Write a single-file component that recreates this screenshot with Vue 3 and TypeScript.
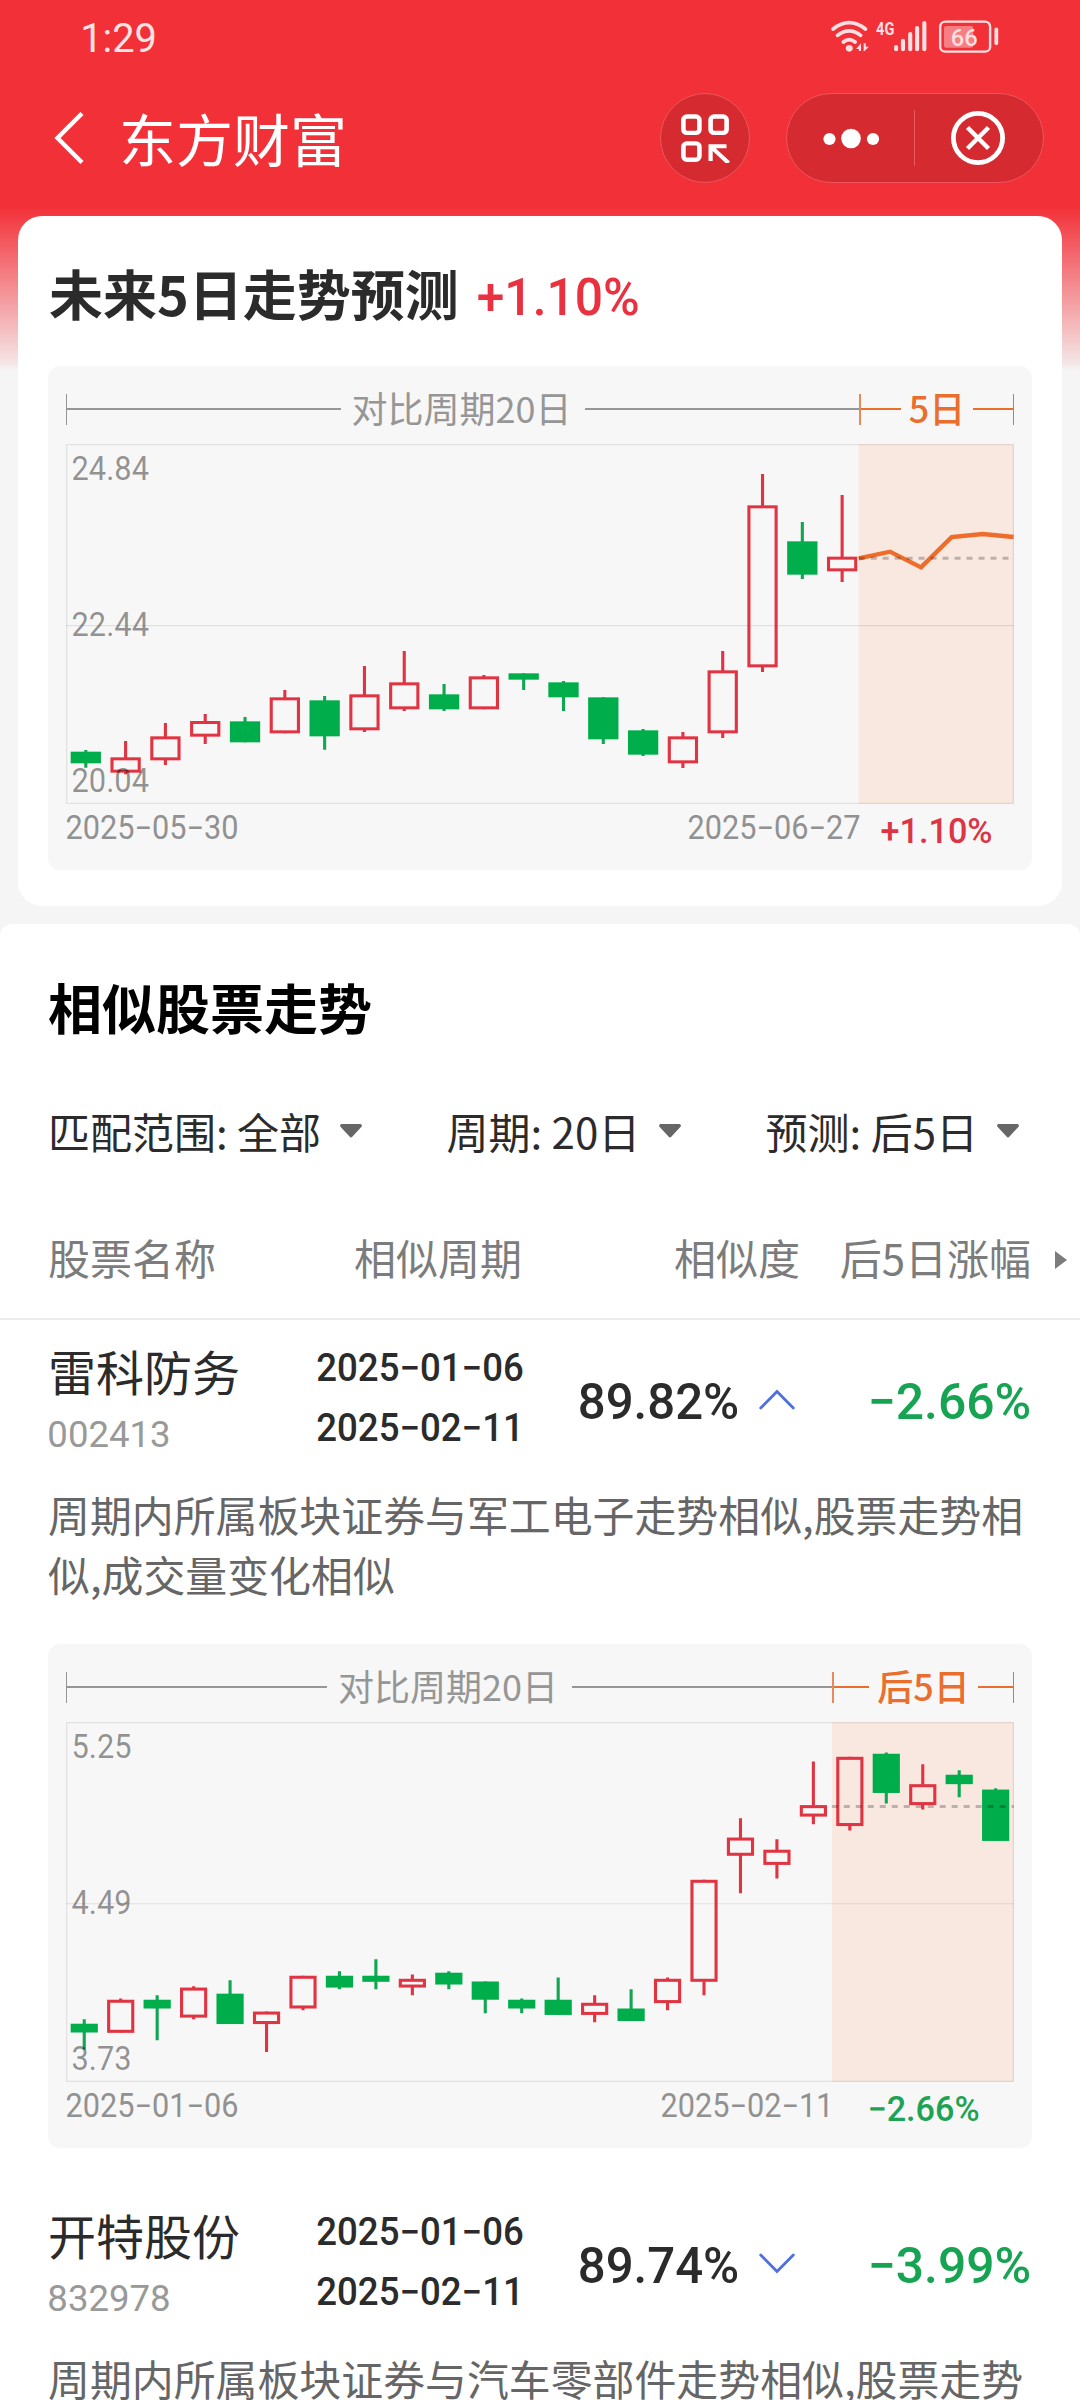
<script setup lang="ts">
import { h } from 'vue'

interface Candle {
  up: boolean
  high: number
  top: number
  bottom: number
  low: number
}
interface Chart {
  period: string
  forecast: string
  viewHeight: number
  middle: number
  labels: { text: string; y: number; width: number }[]
  first: number
  pitch: number
  body: number
  split: number
  from: string
  to: string
  change: string
  rising: boolean
  candles: Candle[]
  reference: number
  line?: string
}

/** Condensed figures: w is the width of the drawn digits, cap their height. */
const Num = (p: { text: string; w: number; cap: number }) => {
  const size = p.cap / 0.711
  return h('svg', { width: p.w, height: p.cap, 'font-size': size }, [
    h(
      'text',
      { x: -0.045 * size, y: p.cap, textLength: p.w + 0.09 * size, lengthAdjust: 'spacingAndGlyphs' },
      p.text,
    ),
  ])
}
Num.props = ['text', 'w', 'cap']

const candles = (rows: [string, number, number, number, number][], offset: number): Candle[] =>
  rows.map(([d, high, top, bottom, low]) => ({
    up: d === 'r',
    high: high - offset,
    top: top - offset,
    bottom: bottom - offset,
    low: low - offset,
  }))

const forecastChart: Chart = {
  period: '对比周期20日',
  forecast: '5日',
  viewHeight: 1080,
  middle: 545,
  labels: [
    { text: '24.84', y: 108, width: 216 },
    { text: '22.44', y: 576, width: 216 },
    { text: '20.04', y: 1044, width: 216 },
  ],
  first: 57.5,
  pitch: 115.6,
  body: 88,
  split: 2302,
  from: '2025−05−30',
  to: '2025−06−27',
  change: '+1.10%',
  rising: true,
  reference: 343,
  line: '2302,343 2393,323 2483,370 2572,279 2662,270 2752,279',
  candles: candles(
    [
      ['g', 1170, 1175, 1210, 1223],
      ['r', 1143, 1192, 1238, 1243],
      ['r', 1089, 1129, 1201, 1215],
      ['r', 1062, 1083, 1130, 1152],
      ['g', 1071, 1084, 1147, 1147],
      ['r', 990, 1012, 1120, 1120],
      ['g', 1008, 1021, 1129, 1169],
      ['r', 918, 1003, 1111, 1116],
      ['r', 873, 967, 1048, 1053],
      ['g', 972, 1003, 1048, 1053],
      ['r', 945, 949, 1048, 1048],
      ['g', 940, 940, 959, 990],
      ['g', 963, 967, 1012, 1053],
      ['g', 1012, 1012, 1138, 1152],
      ['g', 1107, 1111, 1184, 1188],
      ['r', 1116, 1129, 1210, 1224],
      ['r', 873, 931, 1120, 1134],
      ['r', 342, 436, 922, 936],
      ['g', 486, 544, 644, 657],
      ['r', 405, 590, 634, 666],
    ],
    252,
  ),
}

const similarChart: Chart = {
  period: '对比周期20日',
  forecast: '后5日',
  viewHeight: 1065.5,
  middle: 538,
  labels: [
    { text: '5.25', y: 108, width: 165 },
    { text: '4.49', y: 569, width: 165 },
    { text: '3.73', y: 1031, width: 165 },
  ],
  first: 53,
  pitch: 105.87,
  body: 79,
  split: 2224,
  from: '2025−01−06',
  to: '2025−02−11',
  change: '−2.66%',
  rising: false,
  reference: 250,
  candles: candles(
    [
      ['g', 1151, 1164, 1190, 1240],
      ['r', 1089, 1093, 1191, 1191],
      ['g', 1080, 1093, 1119, 1213],
      ['r', 1053, 1057, 1146, 1151],
      ['g', 1035, 1075, 1165, 1165],
      ['r', 1128, 1128, 1165, 1248],
      ['r', 1022, 1022, 1119, 1124],
      ['g', 1009, 1022, 1057, 1062],
      ['g', 973, 1022, 1040, 1062],
      ['r', 1018, 1031, 1057, 1080],
      ['g', 1009, 1013, 1048, 1062],
      ['g', 1039, 1039, 1093, 1133],
      ['g', 1089, 1093, 1119, 1133],
      ['g', 1027, 1093, 1138, 1138],
      ['r', 1080, 1102, 1138, 1160],
      ['g', 1062, 1119, 1156, 1156],
      ['r', 1027, 1031, 1103, 1124],
      ['r', 738, 738, 1040, 1080],
      ['r', 556, 613, 667, 778],
      ['r', 618, 649, 694, 734],
      ['r', 388, 517, 551, 574],
      ['r', 374, 374, 579, 592],
      ['g', 361, 365, 481, 512],
      ['r', 396, 455, 517, 530],
      ['g', 414, 427, 455, 494],
      ['g', 467, 471, 623, 623],
    ],
    271,
  ),
}

const filters = ['匹配范围: 全部', '周期: 20日', '预测: 后5日']

const stocks = [
  {
    name: '雷科防务',
    code: '002413',
    from: '2025−01−06',
    to: '2025−02−11',
    score: '89.82%',
    change: '−2.66%',
    open: true,
    note: '周期内所属板块证券与军工电子走势相似,股票走势相似,成交量变化相似',
    chart: similarChart as Chart | null,
  },
  {
    name: '开特股份',
    code: '832978',
    from: '2025−01−06',
    to: '2025−02−11',
    score: '89.74%',
    change: '−3.99%',
    open: false,
    note: '周期内所属板块证券与汽车零部件走势相似,股票走势',
    chart: null as Chart | null,
  },
]

/** Draws one chart panel: span header, candlestick plot, dates. */
const ChartPanel = (p: { chart: Chart }) => {
  const c = p.chart
  const splitPx = Math.round(c.split / 2.9037)
  const span = (cls: string, label: string, style?: object) =>
    h('div', { class: ['span', cls], style }, [
      h('i', { class: 'rule' }),
      h('span', label),
      h('i', { class: 'rule' }),
    ])
  return h('div', { class: 'panel' }, [
    h('div', { class: 'panel-head' }, [
      span('past', c.period, { width: splitPx + 'px' }),
      span('next', c.forecast),
    ]),
    h(
      'svg',
      { class: 'plot', width: 948, height: 360, viewBox: `0 0 2753 ${c.viewHeight}`, preserveAspectRatio: 'none' },
      [
        h('rect', { x: c.split, y: 0, width: 2753 - c.split, height: c.viewHeight, fill: '#f9e8e0' }),
        h('rect', { class: 'grid', x: 2, y: 2, width: 2749, height: c.viewHeight - 4 }),
        h('path', { class: 'grid', d: `M0 ${c.middle}H2753` }),
        ...c.candles.map((k, i) => {
          const x = c.first + i * c.pitch
          const left = x - c.body / 2
          const height = k.bottom - k.top
          return h('g', { class: k.up ? 'up' : 'down' }, [
            h('path', { d: `M${x} ${k.high}V${k.top + 2}M${x} ${k.bottom - 2}V${k.low}` }),
            k.up
              ? h('rect', { x: left + 4.5, y: k.top + 4.5, width: c.body - 9, height: height - 9 })
              : h('rect', { x: left, y: k.top, width: c.body, height }),
          ])
        }),
        c.line ? h('polyline', { class: 'trend', points: c.line }) : null,
        h('path', { class: 'base', d: `M${c.split} ${c.reference}H2753` }),
        ...c.labels.map((l) =>
          h('text', { x: 16, y: l.y, textLength: l.width + 9, lengthAdjust: 'spacingAndGlyphs' }, l.text),
        ),
      ],
    ),
    h('div', { class: 'panel-foot' }, [
      h('div', { class: 'dates', style: { width: splitPx + 'px' } }, [
        h(Num, { text: c.from, w: 170, cap: 23 }),
        h(Num, { text: c.to, w: 170, cap: 23 }),
      ]),
      h('div', { class: ['change', c.rising ? 'rise' : 'fall'] }, [h(Num, { text: c.change, w: 109, cap: 24.3 })]),
    ]),
  ])
}
ChartPanel.props = ['chart']
</script>

<template>
  <div class="page" lang="zh-CN">
    <header class="top">
      <div class="status">
        <Num class="clock" text="1:29" :w="73" :cap="29.3" />
        <svg class="signals" width="169" height="34" viewBox="845 60 490.7 102" preserveAspectRatio="none">
          <g fill="none" stroke="#ffdfe1" stroke-width="11" stroke-linecap="round">
            <path d="M851 87Q898 49 945 87" />
            <path d="M864 106Q898 79 931 106" />
            <path d="M881 126Q898 112 915 126" />
            <path d="M1034 141V148M1054 122V148M1075 102V148M1095 84V148M1116 69V148" stroke-width="12" />
            <rect x="1162" y="65" width="145" height="90" rx="15" stroke-width="7" />
            <path d="M1325 88V130" />
          </g>
          <rect x="1173" y="78" width="85" height="65" rx="6" fill="#fff" opacity=".38" />
          <circle cx="898" cy="145" r="10" fill="#ffdfe1" />
          <path d="M932 130V153H926V147H918ZM940 130V155L955 140H946V130Z" fill="#ffdfe1" />
          <text x="976" y="104" font-size="57" font-weight="700" textLength="53" lengthAdjust="spacingAndGlyphs">4G</text>
          <text x="1193" y="138" font-size="73" font-weight="500" textLength="78" lengthAdjust="spacingAndGlyphs">66</text>
        </svg>
      </div>
      <nav class="nav">
        <svg class="back" width="30" height="52" viewBox="0 0 30 52" fill="none" stroke="#fff" stroke-width="4.4">
          <path d="M28 1.5L3.5 26L28 50.5" />
        </svg>
        <h1>东方财富</h1>
        <div class="scan">
          <svg width="50" height="50" viewBox="0 0 50 52" preserveAspectRatio="none" fill="none" stroke="#fff" stroke-width="4.6">
            <rect x="3.4" y="3.7" width="16" height="17" rx="3.5" />
            <rect x="30.6" y="3.7" width="16" height="17" rx="3.5" />
            <rect x="3.4" y="31.6" width="16" height="17" rx="3.5" />
            <path d="M46.5 34.6H30.6V50M31 35L48.5 52" stroke-width="4.2" />
          </svg>
        </div>
        <div class="capsule">
          <div class="half">
            <svg width="58" height="22" viewBox="0 0 58 22" fill="#fff">
              <circle cx="7.5" cy="12" r="6.1" />
              <circle cx="29" cy="11.5" r="9.8" />
              <circle cx="51" cy="12" r="6.1" />
            </svg>
          </div>
          <i class="split"></i>
          <div class="half">
            <svg width="56" height="56" viewBox="0 0 56 56" fill="none" stroke="#fff" stroke-width="4.8">
              <circle cx="28" cy="28" r="24.6" />
              <path d="M17.5 17.5L38.5 38.5M38.5 17.5L17.5 38.5" stroke-width="4.4" />
            </svg>
          </div>
        </div>
      </nav>
    </header>

    <section class="card">
      <div class="card-title">
        <h2>未来5日走势预测</h2>
        <Num class="gain" text="+1.10%" :w="158.5" :cap="36.3" />
      </div>
      <ChartPanel :chart="forecastChart" />
    </section>

    <section class="list">
      <h2>相似股票走势</h2>
      <div class="filters">
        <div v-for="f in filters" :key="f" class="filter">
          <span>{{ f }}</span>
          <svg width="22" height="14" viewBox="0 0 22 14" fill="#666">
            <path d="M1.5 0H20.5Q23 1 21.3 3L12.5 12.6Q11 14.4 9.5 12.6L.7 3Q-1 1 1.5 0Z" />
          </svg>
        </div>
      </div>
      <div class="row head">
        <span>股票名称</span>
        <span>相似周期</span>
        <span>相似度</span>
        <span>后5日涨幅</span>
        <svg width="12" height="18" viewBox="0 0 12 18" fill="#7c7c7c"><path d="M0 0L12 9L0 18Z" /></svg>
      </div>
      <article v-for="s in stocks" :key="s.code" class="stock">
        <div class="row main">
          <div class="name">
            <strong>{{ s.name }}</strong>
            <Num class="code" :text="s.code" :w="120" :cap="26" />
          </div>
          <div class="period">
            <Num :text="s.from" :w="204" :cap="27" />
            <Num :text="s.to" :w="204" :cap="27" />
          </div>
          <div class="score">
            <Num :text="s.score" :w="157" :cap="36" />
            <svg class="arrow" :class="{ closed: !s.open }" width="36" height="21" viewBox="0 0 36 21">
              <path d="M1.7 19L18 2.5L34.3 19" />
            </svg>
          </div>
          <div class="result">
            <Num :text="s.change" :w="159" :cap="36" />
          </div>
        </div>
        <p>{{ s.note }}</p>
        <ChartPanel v-if="s.chart" :chart="s.chart" />
      </article>
    </section>
  </div>
</template>

<style>
body {
  margin: 0;
}
.panel {
  box-sizing: border-box;
  width: 984px;
  height: 504px;
  padding: 0 18px;
  border-radius: 12px;
  background: #f7f7f7;
}
.panel-head {
  display: flex;
  box-sizing: border-box;
  height: 78px;
  padding-top: 8px;
  align-items: center;
}
.span {
  display: flex;
  box-sizing: border-box;
  height: 31px;
  align-items: center;
  font-size: 36px;
  line-height: 31px;
  white-space: nowrap;
}
.span span {
  position: relative;
  top: -2px;
}
.span .rule {
  flex: 1;
  height: 1.5px;
  background: currentColor;
}
.past {
  color: #969696;
  border-left: 1px solid #969696;
}
.past span {
  margin: 0 14px 0 11px;
}
.next {
  flex: 1;
  color: #e96f2f;
  border-left: 2px solid #e58a5c;
  border-right: 1px solid #e96f2f;
  font-weight: 500;
}
.next span {
  margin: 0 8px;
}
.plot {
  display: block;
}
.plot .grid {
  fill: none;
  stroke: #000;
  stroke-opacity: 0.09;
  stroke-width: 3.5;
}
.plot .up {
  fill: none;
  stroke: #e03442;
  stroke-width: 9;
}
.plot .down {
  fill: #00ad4b;
}
.plot .down path {
  stroke: #12a552;
  stroke-width: 9;
}
.plot .trend {
  fill: none;
  stroke: #ee6d2b;
  stroke-width: 13;
}
.plot .base {
  stroke: #000;
  stroke-opacity: 0.24;
  stroke-width: 9;
  stroke-dasharray: 17.4 17.4;
}
.plot text {
  fill: #000;
  fill-opacity: 0.42;
  font-family: Roboto, 'Liberation Sans', sans-serif;
  font-size: 97px;
}
.panel-foot {
  display: flex;
  box-sizing: border-box;
  height: 66px;
  padding-top: 12px;
  align-items: flex-start;
}
.page svg {
  display: block;
  flex: none;
}
.panel-foot svg {
  overflow: visible;
  font-family: Roboto, 'Liberation Sans', sans-serif;
}
.dates {
  display: flex;
  justify-content: space-between;
  fill: #919191;
}
.dates svg {
  margin-left: 1px;
}
.change {
  flex: 1;
  display: flex;
  justify-content: center;
  padding-top: 2.5px;
  font-weight: 500;
}
.rise {
  fill: #dc3545;
}
.fall {
  fill: #1ea354;
}
</style>

<style scoped>
.page {
  width: 1080px;
  height: 2400px;
  overflow: hidden;
  background: linear-gradient(#f23038 0, #f23038 207px, #f5e6e7 364px, #f5f5f5 370px);
  font-family: 'Noto Sans CJK SC', 'Noto Sans', sans-serif;
  color: #2b2b2b;
}
h1,
h2,
p {
  margin: 0;
}
.status {
  display: flex;
  box-sizing: border-box;
  height: 80px;
  padding: 20px 80px 0 82px;
  justify-content: space-between;
}
.clock {
  margin-top: 3px;
  fill: #ffe3e4;
}
.clock,
.gain,
.code,
.signals,
.main svg {
  overflow: visible;
  font-family: Roboto, 'Liberation Sans', sans-serif;
}
.signals {
  fill: #ffdfe1;
}
.nav {
  display: flex;
  height: 116px;
  padding: 0 36px 0 54px;
  align-items: center;
}
.nav h1 {
  flex: 1;
  margin-left: 35px;
  padding-bottom: 3px;
  font-size: 57px;
  line-height: 80px;
  font-weight: 400;
  color: #fff;
}
.scan,
.capsule {
  display: flex;
  box-sizing: border-box;
  height: 90px;
  align-items: center;
  justify-content: center;
  border: 1px solid #ee555c;
  background: #d42a30;
}
.scan {
  width: 90px;
  border-radius: 50%;
}
.capsule {
  width: 258px;
  margin-left: 36px;
  border-radius: 45px;
}
.half {
  flex: 1;
  display: flex;
  justify-content: center;
}
.half:first-child {
  flex: none;
  width: 127px;
}
.half:last-child {
  padding-right: 3px;
}
.split {
  width: 1px;
  height: 56px;
  background: #e8585e;
}
.card {
  box-sizing: border-box;
  width: 1044px;
  height: 690px;
  margin: 20px 18px 0;
  padding: 0 30px;
  border-radius: 24px;
  background: #fff;
}
.card-title {
  display: flex;
  box-sizing: border-box;
  height: 150px;
  padding: 3px 0 0 1px;
  align-items: center;
}
h2 {
  font-size: 54px;
  line-height: 80px;
  font-weight: 700;
}
.gain {
  margin: 9px 0 0 20px;
  font-weight: 500;
  fill: #ea3140;
}
.list {
  margin-top: 18px;
  height: 1476px;
  border-radius: 12px 12px 0 0;
  background: #fff;
}
.list h2 {
  padding-left: 48px;
  line-height: 165px;
  color: #000;
}
.filters {
  display: flex;
  height: 83px;
  padding: 0 61px 0 48px;
  align-items: center;
  justify-content: space-between;
  font-size: 42px;
  white-space: nowrap;
}
.filter {
  display: flex;
  align-items: center;
  gap: 19px;
}
.row {
  display: grid;
  box-sizing: border-box;
  grid-template-columns: 270px 204px 278px 231px;
  padding-left: 48px;
}
.head {
  grid-template-columns: 270px 204px 278px 231px 12px;
  height: 148px;
  padding-top: 23px;
  border-bottom: 2px solid #ececec;
  align-items: center;
  font-size: 42px;
  color: #7c7c7c;
  text-align: right;
  white-space: nowrap;
}
.head span:first-child {
  text-align: left;
}
.head svg {
  margin: 7px 0 0 24px;
}
.main {
  height: 164px;
}
.name strong {
  display: block;
  height: 101px;
  font-size: 48px;
  line-height: 101px;
  font-weight: 400;
}
.code {
  margin-left: 1px;
  fill: #999;
}
.period {
  padding-top: 34px;
  font-weight: 500;
  fill: #2b2b2b;
}
.period svg + svg {
  margin-top: 33px;
}
.score {
  display: flex;
  padding: 63px 5px 0 58px;
  justify-content: space-between;
  font-weight: 500;
  fill: #2b2b2b;
}
.arrow {
  margin-top: 6px;
  fill: none;
  stroke: #4f70dc;
  stroke-width: 2.8;
  stroke-linecap: round;
}
.arrow.closed {
  transform: scaleY(-1);
}
.result {
  display: flex;
  padding: 63px 2px 0 0;
  justify-content: flex-end;
  font-weight: 500;
  fill: #17a452;
}
.stock {
  margin-bottom: 36px;
}
.stock p {
  width: 984px;
  margin-left: 48px;
  font-size: 41.9px;
  line-height: 60px;
  color: #666;
}
.stock :deep(.panel) {
  margin: 40px 0 0 48px;
}
</style>
